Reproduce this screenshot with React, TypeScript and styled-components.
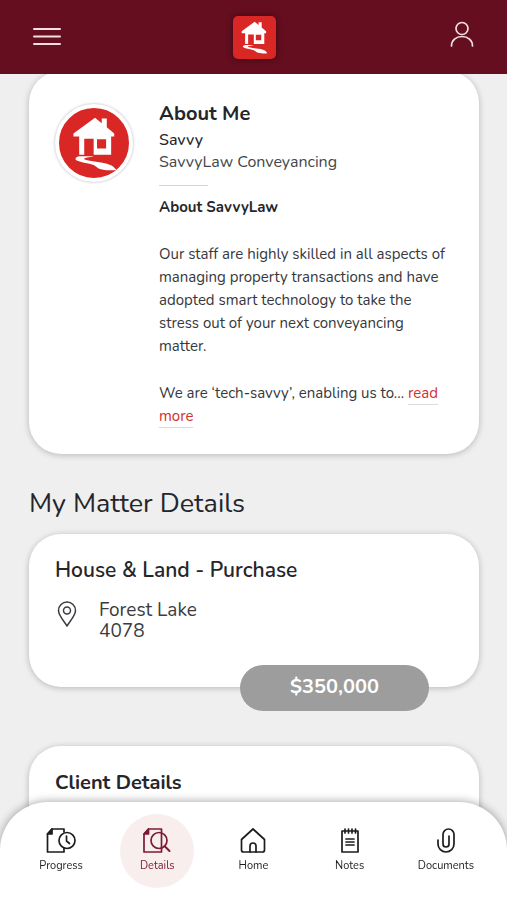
import React from "react";
import styled, { createGlobalStyle, css } from "styled-components";

const GlobalStyle = createGlobalStyle`
  * { box-sizing: border-box; }
  html { scrollbar-width: none; }
  body {
    margin: 0;
    background: #efefef;
    color: #24262b;
    font-family: "Nunito", "Open Sans", "Noto Sans", sans-serif;
    font-size: 15px;
  }
  h1, h2, h3, p { margin: 0; }
  button { font: inherit; color: inherit; border: 0; padding: 0; background: none; cursor: pointer; }
`;

const Header = styled.header`
  position: fixed;
  z-index: 2;
  top: 0;
  left: 0;
  right: 0;
  height: 74px;
  padding: 0 31px 0 32px;
  display: grid;
  grid-template-columns: 1fr auto 1fr;
  align-items: center;
  background: #640e1f;
`;

const IconButton = styled.button<{ $end?: boolean }>`
  display: flex;
  justify-self: ${(p) => (p.$end ? "end" : "start")};
  color: #f3dfe2;
`;

const Logo = styled.a`
  display: flex;
  align-items: center;
  justify-content: center;
  width: 43px;
  height: 43px;
  border-radius: 5px;
  background: #d82725;
  box-shadow: 0 0 6px rgba(40, 0, 10, 0.6);
`;

const Main = styled.main`
  padding: 71px 28px 98px 29px;
`;

const Card = styled.section`
  position: relative;
  padding: 23px 26px;
  border-radius: 32px;
  background: #fff;
  box-shadow: 0 1px 6px rgba(0, 0, 0, 0.24);
`;

const AboutCard = styled(Card)`
  display: grid;
  grid-template-columns: 78px 1fr;
  column-gap: 26px;
  align-items: start;
  padding: 29px 26px 26px 26px;
`;

const MatterCard = styled(Card)`
  min-height: 153px;
  margin-bottom: 59px;
`;

const ClientCard = styled(Card)`
  min-height: 160px;
`;

const Avatar = styled.div`
  display: flex;
  align-items: center;
  justify-content: center;
  width: 78px;
  height: 78px;
  margin-top: 4px;
  border: 4px solid #fff;
  border-radius: 50%;
  background: #d82725;
  box-shadow: 0 0 3px rgba(0, 0, 0, 0.3);
`;

const CardTitle = styled.h2<{ $large?: boolean }>`
  font-size: ${(p) => (p.$large ? 21 : 20)}px;
  line-height: 27px;
  font-weight: ${(p) => (p.$large ? 600 : 700)};
`;

const PersonName = styled.p`
  font-size: 16px;
  line-height: 22px;
  margin-top: 2px;
  font-weight: 500;
`;

const Company = styled.p`
  font-size: 16px;
  line-height: 22px;
  color: #44464a;
`;

const Rule = styled.hr`
  width: 49px;
  height: 1px;
  margin: 12px 0 10px;
  border: 0;
  background: #d4d4d4;
`;

const AboutTitle = styled.h3`
  font-size: 15px;
  line-height: 23px;
  font-weight: 700;
`;

const Paragraph = styled.p`
  margin-top: 24px;
  line-height: 23px;
  color: #36383c;
`;

const More = styled.a`
  padding-bottom: 1px;
  border-bottom: 1px solid #dcdcdc;
  color: #d3302f;
  text-decoration: none;
`;

const PageTitle = styled.h1`
  margin: 32px 0 13px;
  font-size: 27px;
  line-height: 35px;
  font-weight: 400;
`;

const Address = styled.div`
  display: flex;
  gap: 20px;
  margin-top: 16px;
  font-size: 19px;
  line-height: 21px;
  color: #3a3c40;
`;

const Price = styled.div`
  position: absolute;
  right: 50px;
  bottom: -24px;
  width: 189px;
  border-radius: 23px;
  background: #9d9d9d;
  color: #fff;
  font-size: 20px;
  line-height: 44px;
  padding-bottom: 2px;
  font-weight: 700;
  text-align: center;
`;

const Nav = styled.nav`
  position: fixed;
  z-index: 2;
  left: 0;
  right: 0;
  bottom: 0;
  height: 98px;
  padding: 12px 13px 0;
  display: grid;
  grid-template-columns: repeat(5, 1fr);
  justify-items: center;
  align-items: start;
  border-radius: 48px 48px 0 0;
  background: #fff;
  box-shadow: 0 -1px 8px rgba(0, 0, 0, 0.32);
`;

const NavItem = styled.a<{ $active?: boolean }>`
  display: flex;
  flex-direction: column;
  align-items: center;
  gap: 2px;
  width: 74px;
  height: 74px;
  padding-top: 13px;
  border-radius: 50%;
  color: #1d1d20;
  font-size: 11px;
  line-height: 18px;
  text-decoration: none;
  ${(p) =>
    p.$active &&
    css`
      background: #f8eeee;
      color: #7d1b33;
    `}
`;

const House = ({ size }: { size: number }) => (
  <svg width={size} height={size} viewBox="45 39 208 208" fill="#fff" aria-hidden="true">
    <path d="M152 68 172 84V70h15v26l22 19v9h-9v54h-52v-48h-28v48h-15v-54h-17v-9Z M158 132v27h27v-27Z" fillRule="evenodd" />
    <path d="M105 182h43c-12 4-28 4-29 8 4 6 34 8 62 13 18 4 28 10 34 20-18 2-40 2-52-4-8-5-10-10-22-13-16-4-34-6-43-11-8-5-3-11 7-13Z" />
  </svg>
);

const stroke = {
  fill: "none",
  stroke: "currentColor",
  strokeWidth: 1.7,
  strokeLinecap: "round" as const,
  strokeLinejoin: "round" as const,
  "aria-hidden": true,
};

const MenuIcon = () => (
  <svg width="30" height="20" viewBox="0 0 30 20" {...stroke} strokeWidth={2}>
    <path d="M2 2h26M2 9.500h26M2 17h26" />
  </svg>
);

const UserIcon = () => (
  <svg width="28" height="32" viewBox="0 0 28 32" {...stroke}>
    <circle cx="14" cy="7.500" r="6" />
    <path d="M3.500 25c0-5.500 4.500-9.500 10.500-9.500s10.500 4 10.500 9.500" />
  </svg>
);

const PinIcon = () => (
  <svg width="24" height="28" viewBox="0 0 24 28" {...stroke} strokeWidth={1.5}>
    <path d="M12 26C9 21 3.500 15.500 3.500 10.500a8.500 8.500 0 0 1 17 0C20.500 15.500 15 21 12 26Z" />
    <circle cx="12" cy="10.500" r="3.500" />
  </svg>
);

const ProgressIcon = () => (
  <svg width="30" height="28" viewBox="0 0 30 28" {...stroke}>
    <path d="M18 5V2H6L1.500 7v18H18v-4" />
    <path d="M6 2v5H1.500Z" fill="currentColor" />
    <circle cx="21" cy="13.500" r="8" />
    <path d="M20.500 9v5l3 2.500" />
  </svg>
);

const DetailsIcon = () => (
  <svg width="30" height="28" viewBox="0 0 30 28" {...stroke}>
    <path d="M19.500 2H6.500L2 7v18h17.500Z" />
    <path d="M6.500 2v5H2Z" fill="currentColor" />
    <circle cx="17" cy="13.500" r="8" />
    <path d="m22.500 19 5 5" strokeWidth={2} />
  </svg>
);

const HomeIcon = () => (
  <svg width="30" height="28" viewBox="0 0 30 28" {...stroke}>
    <path d="M15 2 3.500 12.500V23a2 2 0 0 0 2 2h19a2 2 0 0 0 2-2V12.500Z" />
    <path d="M12 25v-6a3 3 0 0 1 6 0v6" />
  </svg>
);

const NotesIcon = () => (
  <svg width="30" height="28" viewBox="0 0 30 28" {...stroke}>
    <path d="M7 4h16v21H7Z" />
    <path d="M10 2v4M13.500 2v4M17 2v4M20.500 2v4" />
    <path d="M11 12h8M11 15h8M11 18h8" />
  </svg>
);

const ClipIcon = () => (
  <svg width="30" height="28" viewBox="0 0 30 28" {...stroke}>
    <path d="M7 13v4a8 8 0 0 0 16 0V7.500a5.500 5.500 0 0 0-11 0V17a3 3 0 0 0 6 0V9" />
  </svg>
);

const navItems = [
  { label: "Progress", Icon: ProgressIcon },
  { label: "Details", Icon: DetailsIcon, active: true },
  { label: "Home", Icon: HomeIcon },
  { label: "Notes", Icon: NotesIcon },
  { label: "Documents", Icon: ClipIcon },
];

export default function App() {
  return (
    <>
      <GlobalStyle />
      <Header>
        <IconButton aria-label="Menu"><MenuIcon /></IconButton>
        <Logo href="#home" aria-label="SavvyLaw"><House size={42} /></Logo>
        <IconButton $end aria-label="Account"><UserIcon /></IconButton>
      </Header>
      <Main>
        <AboutCard>
          <Avatar><House size={70} /></Avatar>
          <div>
            <CardTitle>About Me</CardTitle>
            <PersonName>Savvy</PersonName>
            <Company>SavvyLaw Conveyancing</Company>
            <Rule />
            <AboutTitle>About SavvyLaw</AboutTitle>
            <Paragraph>
              Our staff are highly skilled in all aspects of managing property transactions and have
              adopted smart technology to take the stress out of your next conveyancing matter.
            </Paragraph>
            <Paragraph>
              We are ‘tech-savvy’, enabling us to... <More href="#about">read more</More>
            </Paragraph>
          </div>
        </AboutCard>
        <PageTitle>My Matter Details</PageTitle>
        <MatterCard>
          <CardTitle $large>House &amp; Land - Purchase</CardTitle>
          <Address>
            <PinIcon />
            <div>
              <div>Forest Lake</div>
              <div>4078</div>
            </div>
          </Address>
          <Price>$350,000</Price>
        </MatterCard>
        <ClientCard>
          <CardTitle>Client Details</CardTitle>
        </ClientCard>
      </Main>
      <Nav>
        {navItems.map(({ label, Icon, active }) => (
          <NavItem key={label} href={"#" + label.toLowerCase()} $active={active} aria-current={active ? "page" : undefined}>
            <Icon />
            {label}
          </NavItem>
        ))}
      </Nav>
    </>
  );
}
